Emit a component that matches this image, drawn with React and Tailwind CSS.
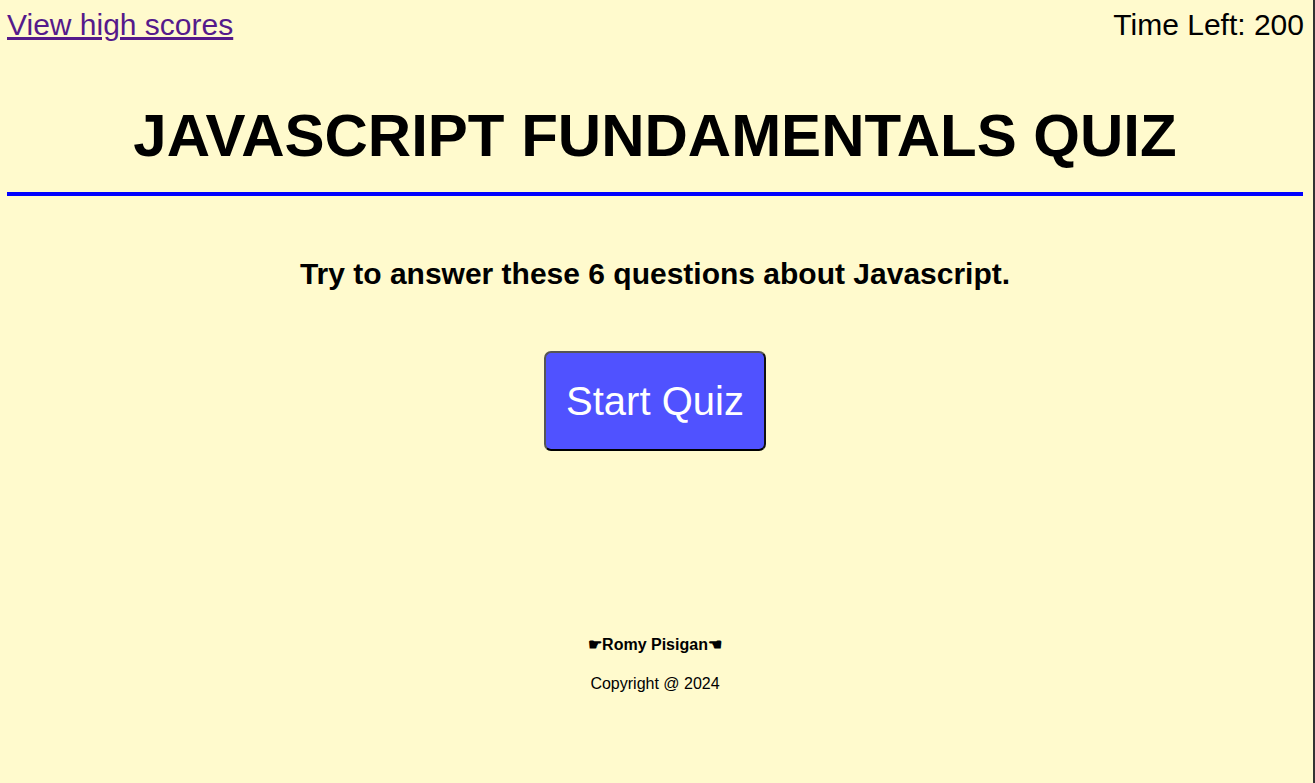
import React from 'react';

export default function App() {
  return (
    <div className="flex h-[783px] w-[1315px] bg-[#fffacd] font-['Liberation_Sans',Arial,sans-serif] text-black">
      <div className="flex-1 pl-[7px] pr-[10px]">
        {/* top bar */}
        <header className="flex items-center justify-between h-[50px]">
          <a href="#" className="text-[30px] leading-[34px] text-[#551a8b] underline">
            View high scores
          </a>
          <p className="text-[30px] leading-[34px] mr-[-1px]">Time Left: 200</p>
        </header>

        <h1 className="mt-[53px] text-center text-[60px] leading-[66px] font-bold">
          JAVASCRIPT FUNDAMENTALS QUIZ
        </h1>
        <div className="mt-[23px] h-[4px] bg-[#0000ff]" />

        <main className="flex flex-col items-center">
          <p className="mt-[61px] text-[30px] leading-[34px] font-bold">
            Try to answer these 6 questions about Javascript.
          </p>
          <button className="mt-[60px] h-[100px] w-[222px] rounded-[7px] border-2 border-t-[#555] border-l-[#555] border-r-[#111] border-b-black bg-[#5052ff] text-[40px] text-white">
            Start Quiz
          </button>
        </main>

        <footer className="mt-[184px] flex flex-col items-center">
          <p className="text-[16px] font-bold leading-[20px]">☛Romy Pisigan☚</p>
          <p className="mt-[19px] text-[16px] leading-[20px]">Copyright @ 2024</p>
        </footer>
      </div>
      <div className="w-[2px] bg-[#333]" />
    </div>
  );
}
